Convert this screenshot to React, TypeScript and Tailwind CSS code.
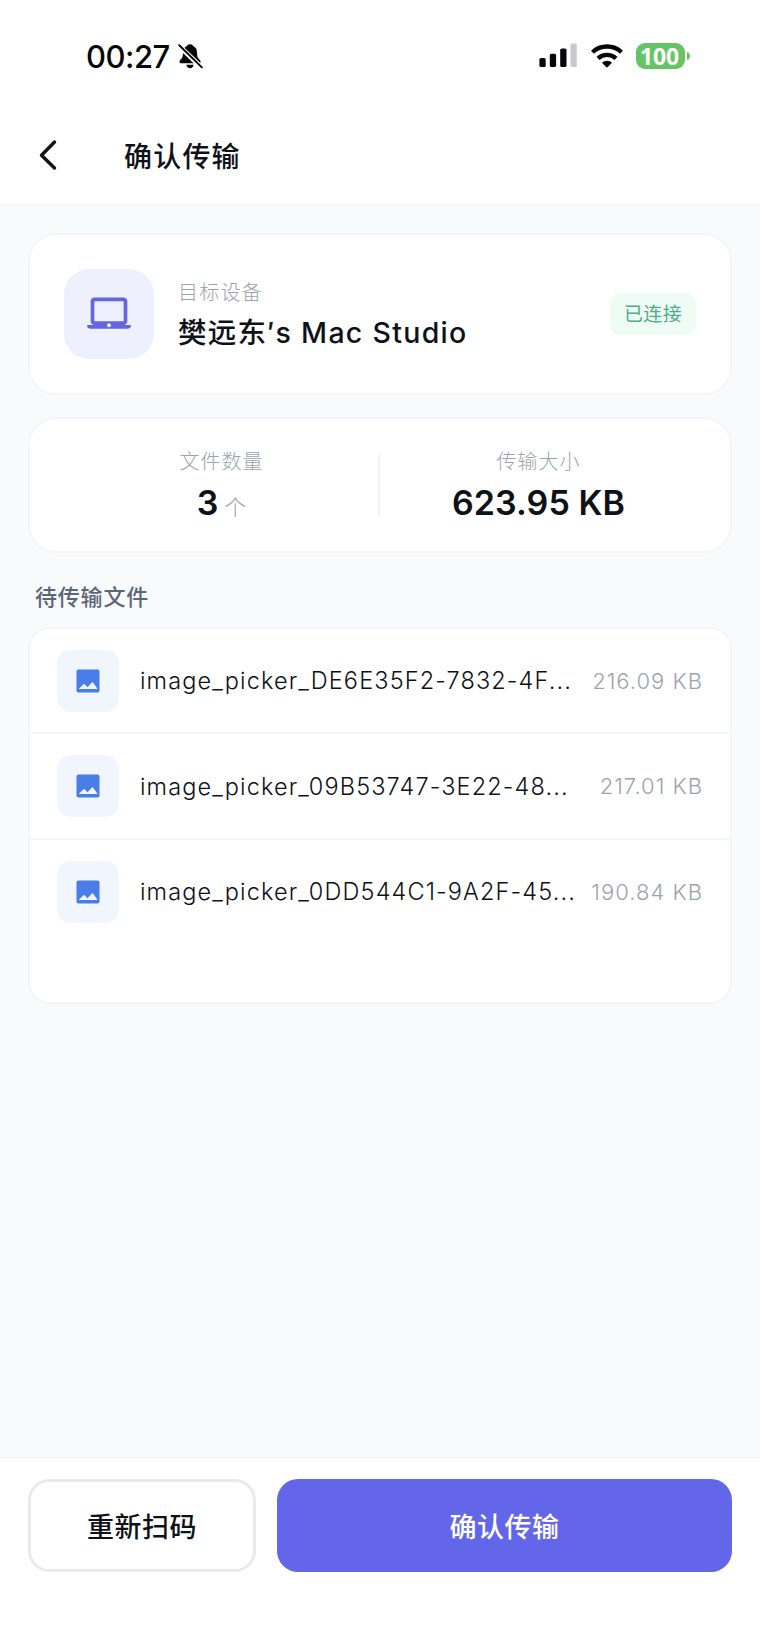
import React from 'react';

function BellOff() {
  return (
    <svg width="25" height="27" viewBox="0 0 26 28" fill="none">
      <path d="M12.500 1.200c-1.900 0-3 1-3.300 2.200C5.700 4.600 5.300 7.600 5.200 10.500c-.1 3.800-.9 5.300-2.900 7.200-1.500 1.500-.9 3.300.9 3.300h18.600c1.800 0 2.400-1.800.9-3.300-2-1.900-2.800-3.400-2.900-7.200-.1-2.900-.5-5.900-4-7.100C15.500 2.200 14.400 1.200 12.500 1.200z" fill="#070709" />
      <path d="M8.700 22.600h7.600c-.4 2.200-1.900 3.600-3.800 3.600s-3.400-1.400-3.800-3.600z" fill="#070709" />
      <path d="M1 2.800l23.500 22.700" stroke="#fff" strokeWidth="5" />
      <path d="M1.300 2.300l23.500 23" stroke="#070709" strokeWidth="2" strokeLinecap="round" />
    </svg>
  );
}

function Signal() {
  return (
    <svg width="38" height="26" viewBox="0 0 38 26">
      <rect x="0.400" y="15" width="6.300" height="9" rx="1.600" fill="#070709" />
      <rect x="10.800" y="10.800" width="6.300" height="13.200" rx="1.600" fill="#070709" />
      <rect x="21.200" y="5.600" width="6.300" height="18.400" rx="1.600" fill="#070709" />
      <rect x="31.500" y="0.500" width="6.300" height="23.500" rx="1.600" fill="#c9c9cb" />
    </svg>
  );
}

function Wifi() {
  return (
    <svg width="34" height="25" viewBox="0 0 34 25" fill="none">
      <path d="M2.500 8.200C10.500 .6 23.500 .6 31.500 8.200" stroke="#070709" strokeWidth="4.300" />
      <path d="M8 14.400c5-4.800 13-4.800 18 0" stroke="#070709" strokeWidth="4.300" />
      <path d="M17 16.700c-2 0-3.700.7-5 2l4.200 4.300c.5.500 1.100.5 1.600 0l4.200-4.300c-1.300-1.300-3-2-5-2z" fill="#070709" />
    </svg>
  );
}

function StatusBar() {
  return (
    <div className="flex h-[112px] items-center justify-between pr-[70px] pl-[86px] text-[#070709]">
      <div className="flex items-center">
        <span className="pt-[2px] text-[31px] leading-10 font-medium tracking-[-0.5px]">00:27</span>
        <span className="ml-[8px]"><BellOff /></span>
      </div>
      <div className="flex items-center">
        <Signal />
        <span className="ml-[13px]"><Wifi /></span>
        <span className="ml-[12px] flex h-[26px] w-[49px] items-center justify-center rounded-[9px] bg-[#65c466] pr-[2px] font-['Noto_Sans',sans-serif] text-[23px] leading-[26px] font-bold tracking-[-0.2px] text-white">100</span>
        <svg className="ml-[2px]" width="3" height="8" viewBox="0 0 3 8"><path d="M0 0c1.700.600 3 2.100 3 4s-1.300 3.400-3 4z" fill="#65c466" /></svg>
      </div>
    </div>
  );
}

function Laptop() {
  return (
    <svg width="44" height="44" viewBox="0 0 24 24" fill="#6366e0">
      <path fillRule="evenodd" d="M20 18c1.100 0 2-.9 2-2V5c0-1.100-.9-2-2-2H4c-1.100 0-2 .9-2 2v11c0 1.100.9 2 2 2H.5c-.3 0-.5.200-.5.500C0 19.300.9 20 2 20h20c1.100 0 2-.7 2-1.500 0-.3-.2-.5-.5-.5H20zM4.500 5h15c.3 0 .5.200.5.500v10c0 .3-.2.500-.5.500h-15c-.3 0-.5-.2-.5-.5v-10c0-.3.200-.5.500-.5zM12 19.200a1.100 1.100 0 1 1 0-2.200 1.100 1.100 0 0 1 0 2.200z" />
    </svg>
  );
}

function ImageIcon() {
  return (
    <svg width="24" height="24" viewBox="0 0 24 24">
      <rect x="0.500" y="0.500" width="23" height="23" rx="2" fill="#4b7de8" />
      <path d="M3.300 20.100h17.800c.3 0 .4-.4.200-.7l-4.300-5.900c-.3-.4-.8-.4-1.100 0l-4.400 4.700-2.900-2.900c-.3-.3-.8-.3-1 0L3.100 19.400c-.2.300-.1.700.2.700z" fill="#eff6ff" />
    </svg>
  );
}

const files = [
  { name: 'image_picker_DE6E35F2-7832-4F...', size: '216.09 KB', row: 'h-[105px] border-b-2' },
  { name: 'image_picker_09B53747-3E22-48...', size: '217.01 KB', row: 'h-[106px] border-b-2' },
  { name: 'image_picker_0DD544C1-9A2F-45...', size: '190.84 KB', row: 'h-[103px]' },
];

export default function App() {
  return (
    <div className="flex h-[1645px] w-[760px] flex-col bg-[#f9fafc] font-['Inter','Noto_Sans_CJK_SC',sans-serif] text-[#0f1118]">
      <header className="h-[205px] border-b border-[#f3f4f6] bg-white">
        <StatusBar />
        <div className="flex h-[86px] items-center pl-[39px]">
          <svg width="20" height="32" viewBox="0 0 20 32" fill="none" stroke="#12141c" strokeWidth="3.400" strokeLinecap="round" strokeLinejoin="round"><path d="M15.500 3L2.500 16.200l13 12.800" /></svg>
          <h1 className="ml-[65px] pt-[3px] text-[28px] leading-10 font-medium tracking-[1.200px]">确认传输</h1>
        </div>
      </header>

      <main className="flex flex-1 flex-col px-[28px] pt-[28px]">
        <section className="flex h-[162px] items-center rounded-[28px] border-2 border-[#f4f5f8] bg-white px-[34px]">
          <div className="flex size-[90px] items-center justify-center rounded-[25px] bg-[#eff0fd]"><Laptop /></div>
          <div className="ml-[24px] flex flex-1 flex-col pt-[2px]">
            <span className="text-[20px] leading-[30px] font-light tracking-[1.200px] text-[#9ca3af]">目标设备</span>
            <span className="mt-[5px] text-[28.500px] leading-[40px] font-medium tracking-[1.300px]">樊远东′s Mac Studio</span>
          </div>
          <div className="flex h-[42px] w-[86px] items-center justify-center rounded-[11px] bg-[#effcf6] pt-[3px] text-[19px] tracking-[0.4px] text-[#4eae85]">已连接</div>
        </section>

        <section className="mt-[22px] flex h-[136px] items-center rounded-[28px] border-2 border-[#f4f5f8] bg-white px-[35px]">
          <div className="flex flex-1 flex-col items-center">
            <span className="text-[20px] leading-[30px] font-light tracking-[1px] text-[#9ca3af]">文件数量</span>
            <div className="mt-[6px] flex h-[40px] items-baseline">
              <span className="text-[34px] leading-[40px] font-semibold">3</span>
              <span className="ml-[6px] text-[22px] leading-[30px] font-light text-[#9ca3af]">个</span>
            </div>
          </div>
          <div className="h-[64px] w-[2px] bg-[#f4f5f7]" />
          <div className="flex flex-1 flex-col items-center pl-[2px]">
            <span className="text-[20px] leading-[30px] font-light tracking-[1px] text-[#9ca3af]">传输大小</span>
            <span className="mt-[6px] text-[34px] leading-[40px] font-semibold tracking-[0.1px]">623.95 KB</span>
          </div>
        </section>

        <h2 className="mt-[26px] pl-[7px] text-[22px] leading-[36px] font-medium tracking-[0.800px] text-[#5b6678]">待传输文件</h2>

        <section className="mt-[12px] h-[377px] rounded-[22px] border-2 border-[#f4f5f8] bg-white">
          {files.map((file) => (
            <div key={file.name} className={`flex items-center border-[#f4f5f7] px-[27px] ${file.row}`}>
              <div className="flex size-[62px] items-center justify-center rounded-[14px] bg-[#f0f5fe]"><ImageIcon /></div>
              <span className="ml-[21px] flex-1 pt-px text-[23.500px] font-[350] tracking-[1.130px] whitespace-nowrap">{file.name}</span>
              <span className="pt-px text-[22px] font-[350] tracking-[1px] text-[#9ca3af]">{file.size}</span>
            </div>
          ))}
        </section>
      </main>

      <footer className="flex h-[188px] gap-[21px] border-t border-[#f3f4f6] bg-white px-[28px] pt-[21px]">
        <button className="h-[93px] w-[228px] rounded-[21px] border-[3px] border-[#e8eaee] pt-[5px] text-[27px] font-medium tracking-[0.5px]">重新扫码</button>
        <button className="h-[93px] flex-1 rounded-[21px] bg-[#6366e8] pt-[5px] text-[27px] font-medium tracking-[0.5px] text-white">确认传输</button>
      </footer>
    </div>
  );
}
